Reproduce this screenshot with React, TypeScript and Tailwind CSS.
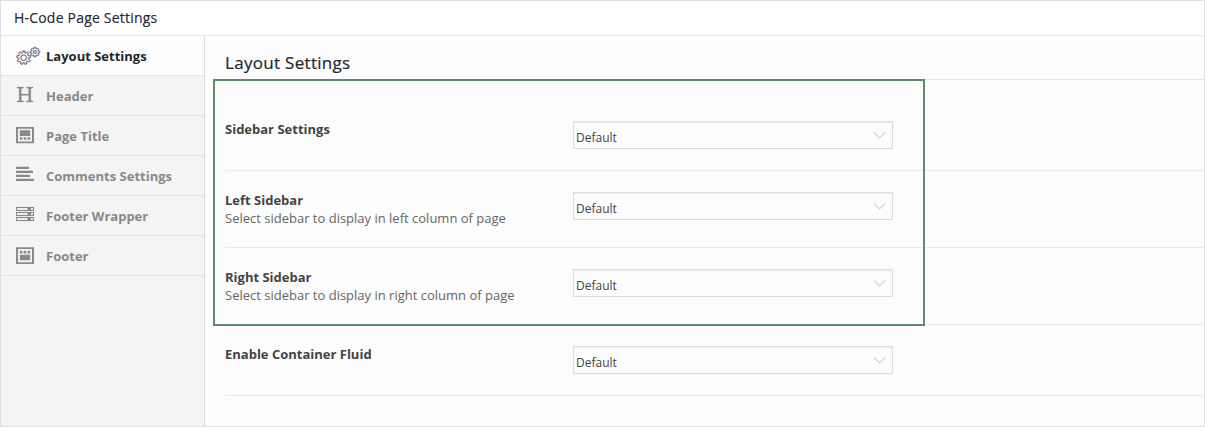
import React from 'react';

function gearPath(cx: number, cy: number, outer: number, inner: number, teeth: number): string {
  const points: string[] = [];
  const step = (Math.PI * 2) / teeth;
  for (let i = 0; i < teeth; i++) {
    const a = i * step - Math.PI / 2;
    const corners: [number, number][] = [
      [inner, -0.32],
      [outer, -0.2],
      [outer, 0.2],
      [inner, 0.32],
    ];
    corners.forEach(([r, k]) => {
      points.push(`${(cx + r * Math.cos(a + k * step)).toFixed(2)} ${(cy + r * Math.sin(a + k * step)).toFixed(2)}`);
    });
  }
  return `M${points.join('L')}Z`;
}

function Gears() {
  return (
    <>
      <path d={gearPath(7.6, 11.7, 6.8, 5.1, 9)} />
      <circle cx="7.6" cy="11.7" r="2.8" />
      <path d={gearPath(18.9, 6.1, 4.8, 3.6, 8)} />
      <circle cx="18.9" cy="6.1" r="1.5" />
    </>
  );
}

function GearsIcon() {
  return (
    <svg width="26" height="20" viewBox="0 0 26 20" fill="none" strokeWidth="0.6">
      <g stroke="#d9824a" transform="translate(-0.4 0)">
        <Gears />
      </g>
      <g stroke="#4a7cc8" transform="translate(0.4 0)">
        <Gears />
      </g>
      <g stroke="#4a4048" strokeOpacity="0.6">
        <Gears />
      </g>
    </svg>
  );
}

function HeaderIcon() {
  return (
    <svg width="26" height="20" viewBox="0 0 26 20" fill="#8a8a8a" stroke="#8a8a8a" strokeWidth="0.3">
      <path d="M1 1h6.500v1L5.300 2.400V8h7.400V2.400L10.500 2V1H17v1l-2.200.4v12.200l2.200.4v1h-6.500v-1l2.200-.4V9.300H5.300v5.300l2.200.4v1H1v-1l2.200-.4V2.400L1 2z" />
    </svg>
  );
}

function PageTitleIcon() {
  return (
    <svg width="26" height="20" viewBox="0 0 26 20" fill="#8a8a8a">
      <path fillRule="evenodd" d="M0 1h18v16.300H0zM2 2.800v12.700h14V2.800z" />
      <path d="M3.800 4.300h10.400V10H3.800zM3.800 11.300h2.600v2.400H3.800zM7.700 11.300h2.600v2.400H7.700zM11.600 11.300h2.600v2.400h-2.600z" />
    </svg>
  );
}

function CommentsIcon() {
  return (
    <svg width="26" height="20" viewBox="0 0 26 20" fill="#8a8a8a">
      <path d="M0 .8h13v2.300H0zM0 4.800h17v2.300H0zM0 8.800h14v2.300H0zM0 12.800h18v2.300H0z" />
    </svg>
  );
}

function FooterWrapperIcon() {
  return (
    <svg width="26" height="20" viewBox="0 0 26 20">
      {[1.5, 6.5, 11.5].map((y) => (
        <g key={y}>
          <rect x="0.5" y={y} width="17" height="3" fill="none" stroke="#8a8a8a" strokeWidth="1.1" />
          <rect x="11.5" y={y} width="3.500" height="3" fill="#8a8a8a" />
        </g>
      ))}
    </svg>
  );
}

function FooterIcon() {
  return (
    <svg width="26" height="20" viewBox="0 0 26 20" fill="#8a8a8a">
      <path fillRule="evenodd" d="M0 1.200h18V18H0zM2 3v13.200h14V3z" />
      <path d="M3.800 4.800h2.600v2.700H3.800zM7.700 4.800h2.600v2.700H7.700zM11.600 4.800h2.600v2.700h-2.600zM3.800 8.800h10.400v5.400H3.800z" />
    </svg>
  );
}

const tabs = [
  { label: 'Layout Settings', Icon: GearsIcon },
  { label: 'Header', Icon: HeaderIcon },
  { label: 'Page Title', Icon: PageTitleIcon },
  { label: 'Comments Settings', Icon: CommentsIcon },
  { label: 'Footer Wrapper', Icon: FooterWrapperIcon },
  { label: 'Footer', Icon: FooterIcon },
];

const rows = [
  { label: 'Sidebar Settings', note: '', size: 'h-[91px] pt-10' },
  { label: 'Left Sidebar', note: 'Select sidebar to display in left column of page', size: 'h-[77px] pt-5' },
  { label: 'Right Sidebar', note: 'Select sidebar to display in right column of page', size: 'h-[77px] pt-5' },
  { label: 'Enable Container Fluid', note: '', size: 'h-[71px] pt-5' },
];

function SelectBox() {
  return (
    <button className="mt-px flex h-7 w-[320px] shrink-0 items-start justify-between border border-[#dddddd] bg-[#fcfcfc] pl-[2px] pr-[6px] text-left text-[12px] leading-[18px] text-[#444444] shadow-[inset_0_1px_2px_rgba(0,0,0,0.07)]">
      <span className="pt-[7px]">Default</span>
      <svg className="mt-[9px]" width="13" height="9" viewBox="0 0 13 9" fill="none" stroke="#d2d2d2" strokeWidth="1.1">
        <path d="M1 1.500l5.500 5.500L12 1.500" />
      </svg>
    </button>
  );
}

export default function App() {
  return (
    <div className="flex h-[427px] w-[1205px] flex-col border border-[#dfdfdf] bg-[#fcfcfc] font-['Open_Sans',sans-serif] text-[13px]">
      <header className="h-[35px] shrink-0 border-b border-[#e9e9e9] bg-white pl-[13px] text-[14px] leading-[33px] tracking-[0.2px] text-[#23282d] [-webkit-text-stroke:0.15px]">
        H-Code Page Settings
      </header>
      <div className="flex min-h-0 flex-1">
        <nav className="w-[204px] shrink-0 border-r border-[#dadada] bg-[#f4f4f4]">
          {tabs.map(({ label, Icon }, index) => (
            <a
              key={label}
              className={
                index === 0
                  ? 'flex h-10 border-b border-[#e6e6e6] bg-[#fcfcfc] pl-[15px] font-bold text-[#23282d]'
                  : 'flex h-10 border-b border-[#e6e6e6] pl-[15px] font-bold text-[#888888]'
              }
            >
              <span className="w-[30px] pt-[10px]">
                <Icon />
              </span>
              <span className="leading-10">{label}</span>
            </a>
          ))}
        </nav>
        <main className="relative min-w-0 flex-1 pl-5">
          <h2 className="h-11 border-b border-[#e6e6e6] pt-[15px] text-[17px] leading-6 tracking-[0.3px] text-[#23282d] [-webkit-text-stroke:0.2px]">
            Layout Settings
          </h2>
          {rows.map((row) => (
            <section key={row.label} className={`flex border-b border-[#e9e9e9] ${row.size}`}>
              <div className="w-[348px] shrink-0 leading-[18px]">
                <h3 className="font-bold text-[#444444]">{row.label}</h3>
                {row.note && <p className="text-[#666666]">{row.note}</p>}
              </div>
              <SelectBox />
            </section>
          ))}
          <div className="pointer-events-none absolute left-2 top-[43px] h-[247px] w-[712px] border-2 border-[#5b8c6b]" />
        </main>
      </div>
    </div>
  );
}
